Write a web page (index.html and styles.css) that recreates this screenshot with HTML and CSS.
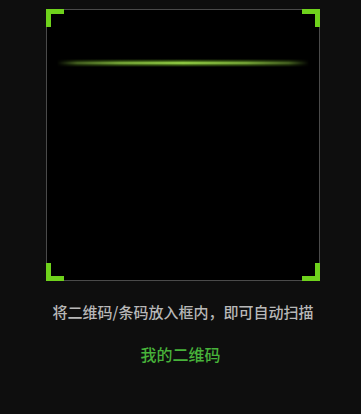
FILE: index.html
```html
<!DOCTYPE html>
<html lang="zh">
<head>
<meta charset="utf-8">
<link rel="stylesheet" href="styles.css">
</head>
<body>
<div class="page">
  <div class="frame">
    <span class="corner tl"></span>
    <span class="corner tr"></span>
    <span class="corner bl"></span>
    <span class="corner br"></span>
    <div class="scanline"></div>
  </div>
  <p class="hint">将二维码/条码放入框内，即可自动扫描</p>
  <p class="mine">我的二维码</p>
</div>
</body>
</html>
```
FILE: styles.css
```css
html, body {
  margin: 0;
  padding: 0;
  background: #0e0e0e;
  height: 100%;
}
.page {
  width: 361px;
  height: 414px;
  display: flex;
  flex-direction: column;
  align-items: center;
  font-family: "Noto Sans CJK SC", "Noto Sans", sans-serif;
}
.frame {
  position: relative;
  box-sizing: border-box;
  width: 274px;
  height: 272px;
  margin-top: 9px;
  margin-left: 5px;
  border: 1px solid #4a4a4a;
  background: #000;
}
.corner {
  position: absolute;
  width: 18px;
  height: 18px;
  border: 0 solid #6fd21c;
  box-sizing: border-box;
}
.tl { left: -1px; top: -1px; border-left-width: 5px; border-top-width: 5px; }
.tr { right: -1px; top: -1px; border-right-width: 5px; border-top-width: 5px; }
.bl { left: -1px; bottom: -1px; border-left-width: 5px; border-bottom-width: 5px; }
.br { right: -1px; bottom: -1px; border-right-width: 5px; border-bottom-width: 5px; }
.scanline {
  position: absolute;
  left: 10px;
  right: 10px;
  top: 49px;
  height: 8px;
  background: linear-gradient(180deg, rgba(120,190,40,0) 0%, rgba(120,190,40,0.5) 25%, rgba(165,230,80,1) 50%, rgba(120,190,40,0.5) 75%, rgba(120,190,40,0) 100%);
  -webkit-mask-image: linear-gradient(90deg, rgba(0,0,0,0) 0%, rgba(0,0,0,0.45) 8%, rgba(0,0,0,0.8) 25%, #000 50%, rgba(0,0,0,0.8) 75%, rgba(0,0,0,0.45) 92%, rgba(0,0,0,0) 100%);
  mask-image: linear-gradient(90deg, rgba(0,0,0,0) 0%, rgba(0,0,0,0.45) 8%, rgba(0,0,0,0.8) 25%, #000 50%, rgba(0,0,0,0.8) 75%, rgba(0,0,0,0.45) 92%, rgba(0,0,0,0) 100%);
}
.hint {
  margin: 20px 0 0 5px;
  font-size: 15px;
  font-weight: 500;
  line-height: 22px;
  color: #b8b8b8;
}
.mine {
  margin: 20px 0 0 0;
  font-size: 16px;
  font-weight: 500;
  line-height: 22px;
  color: #47b23a;
}
```
